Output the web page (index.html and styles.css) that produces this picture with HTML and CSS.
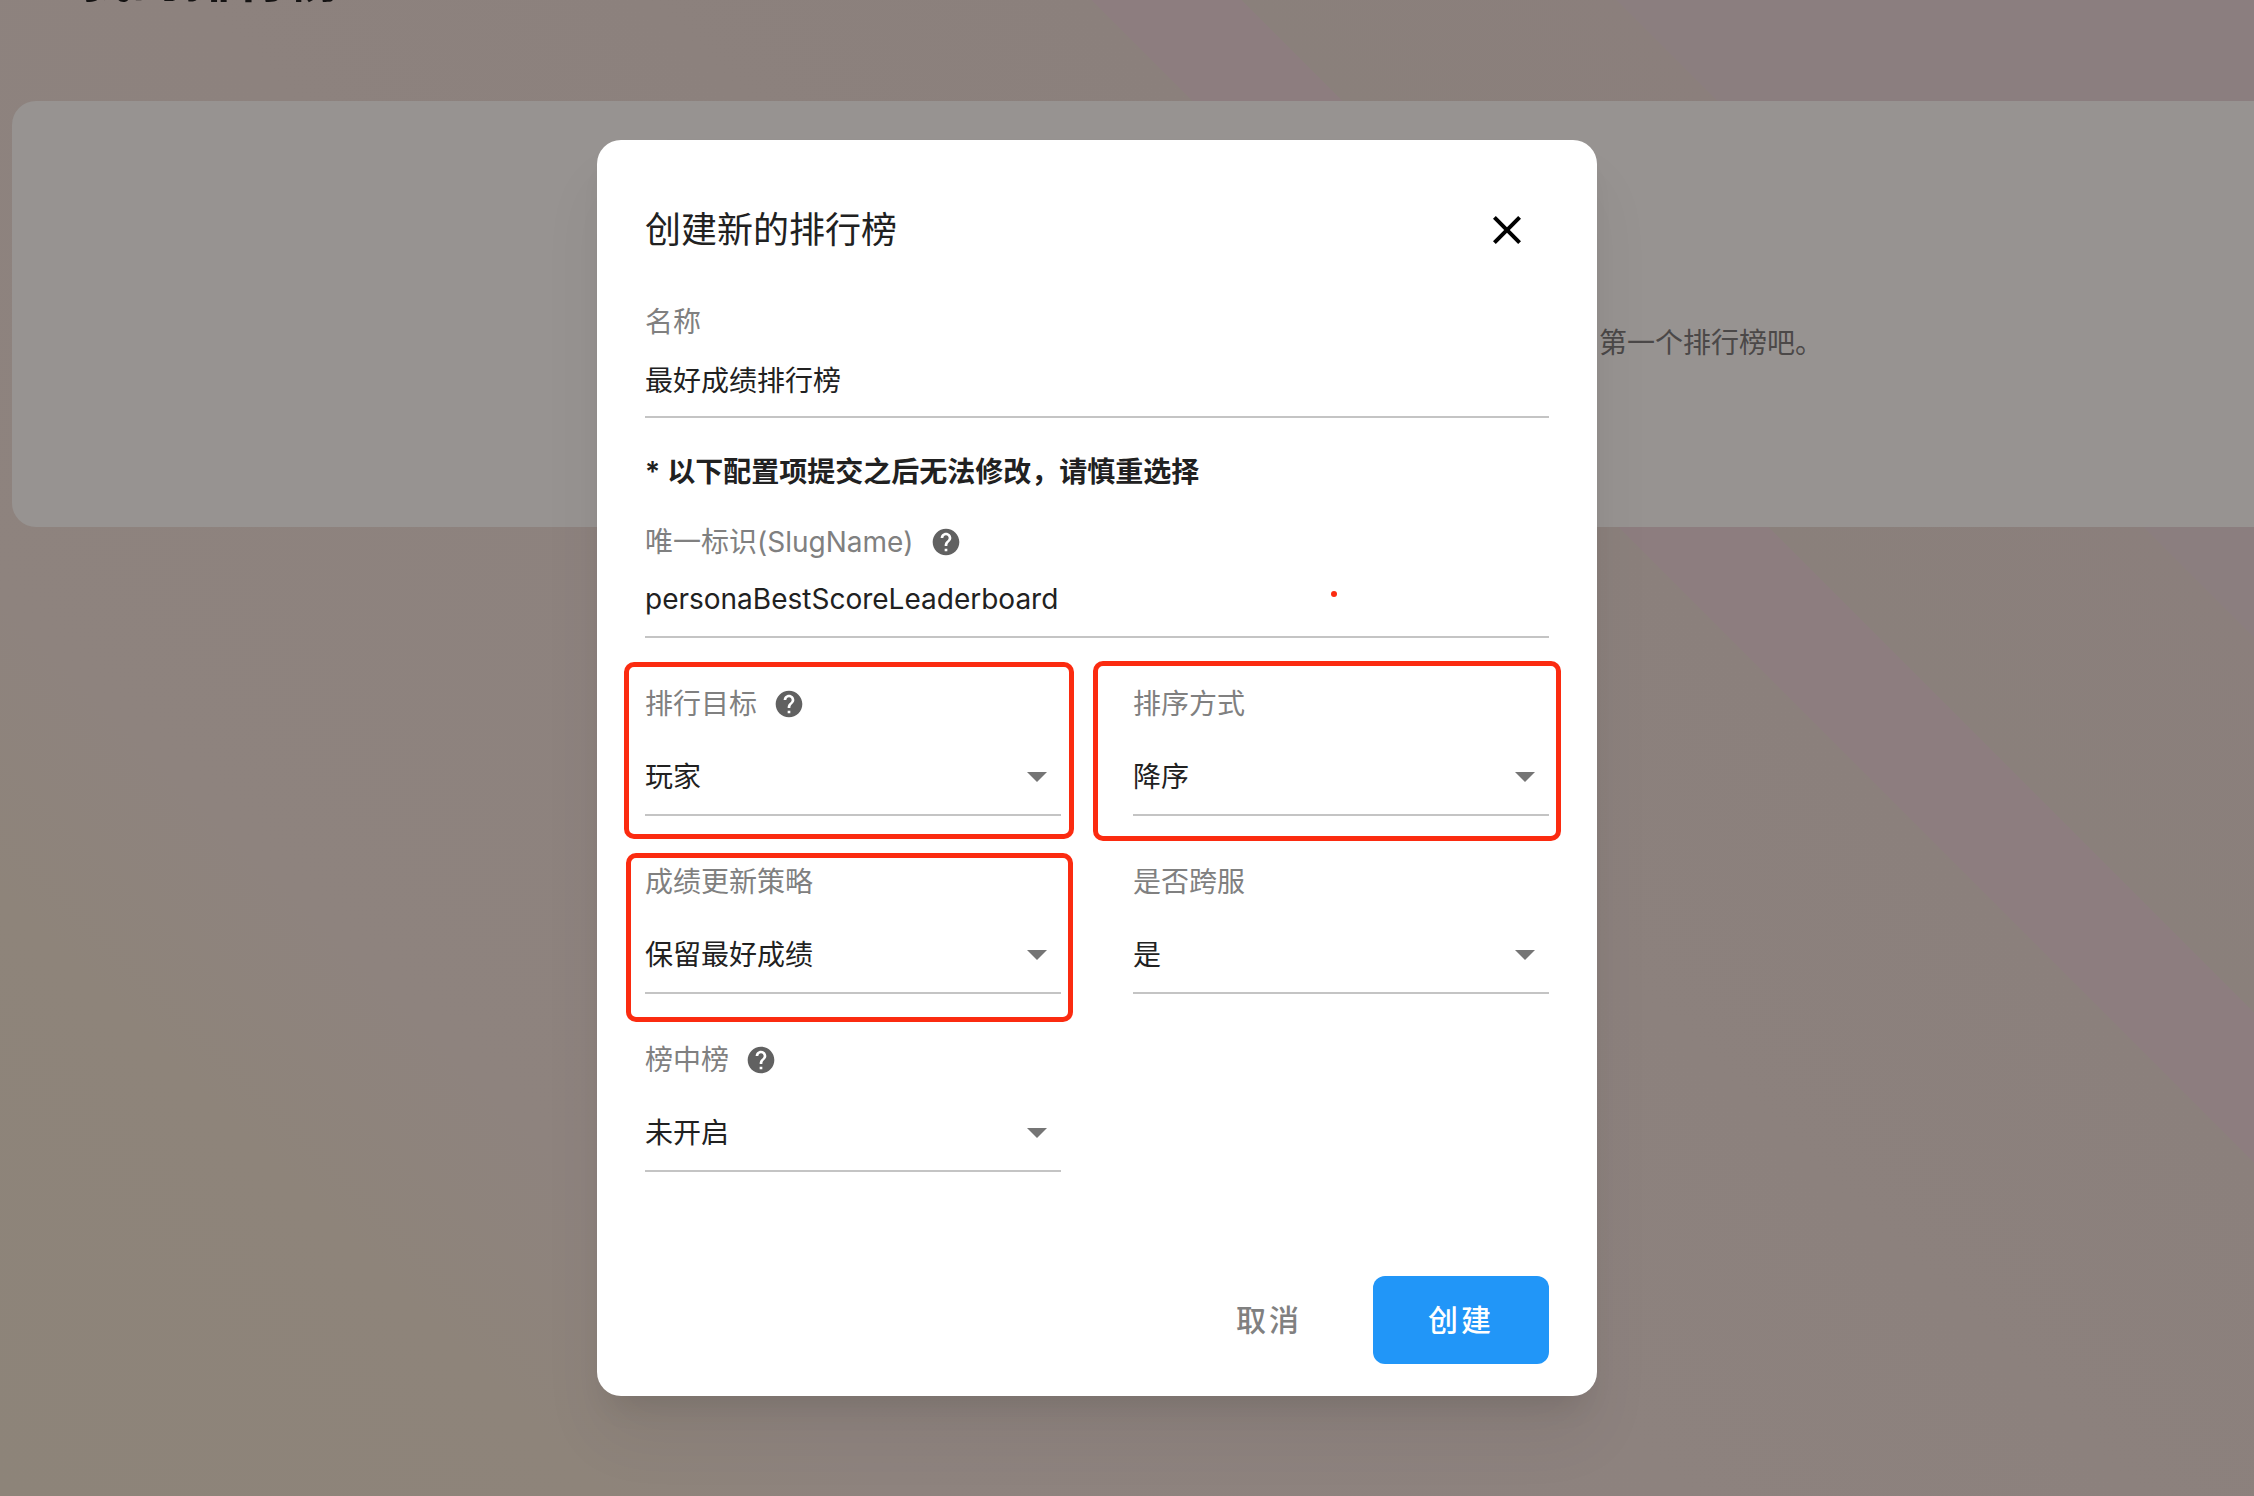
FILE: index.html
```html
<!DOCTYPE html>
<html lang="zh-CN">
<head>
<meta charset="utf-8">
<title>创建新的排行榜</title>
<link rel="stylesheet" href="styles.css">
</head>
<body>
<svg class="sprite" aria-hidden="true">
  <symbol id="help" viewBox="0 0 24 24"><path d="M12 2C6.48 2 2 6.48 2 12s4.48 10 10 10 10-4.48 10-10S17.52 2 12 2zm1 17h-2v-2h2v2zm2.07-7.75l-.9.92C13.45 12.9 13 13.5 13 15h-2v-.5c0-1.1.45-2.1 1.17-2.83l1.24-1.26c.37-.36.59-.86.59-1.41 0-1.1-.9-2-2-2s-2 .9-2 2H8c0-2.21 1.79-4 4-4s4 1.79 4 4c0 .88-.36 1.68-.93 2.25z"/></symbol>
  <symbol id="arrow" viewBox="0 0 24 24"><path d="M7 10l5 5 5-5z"/></symbol>
</svg>
<main class="page">
  <h1 class="page-title">我的排行榜</h1>
  <section class="empty-card"><p class="empty-text">第一个排行榜吧。</p></section>
</main>
<div class="overlay">
  <form class="dialog" role="dialog" aria-labelledby="dialog-title">
    <header class="dialog-header">
      <h2 class="dialog-title" id="dialog-title">创建新的排行榜</h2>
      <button class="close" type="button" aria-label="关闭">
        <svg viewBox="0 0 24 24"><path d="M19 6.41L17.59 5 12 10.59 6.41 5 5 6.41 10.59 12 5 17.59 6.41 19 12 13.41 17.59 19 19 17.59 13.41 12z"/></svg>
      </button>
    </header>
    <div class="field">
      <label class="label" for="name">名称</label>
      <input class="control" id="name" type="text" value="最好成绩排行榜">
    </div>
    <p class="notice">* 以下配置项提交之后无法修改，请慎重选择</p>
    <div class="field">
      <label class="label" for="slug">唯一标识(SlugName)<svg class="help"><use href="#help"/></svg></label>
      <input class="control" id="slug" type="text" value="personaBestScoreLeaderboard">
    </div>
    <div class="options">
      <div class="field">
        <label class="label" for="target">排行目标<svg class="help"><use href="#help"/></svg></label>
        <div class="select"><select class="control" id="target"><option>玩家</option></select><svg class="arrow"><use href="#arrow"/></svg></div>
      </div>
      <div class="field">
        <label class="label" for="order">排序方式</label>
        <div class="select"><select class="control" id="order"><option>降序</option></select><svg class="arrow"><use href="#arrow"/></svg></div>
      </div>
      <div class="field">
        <label class="label" for="policy">成绩更新策略</label>
        <div class="select"><select class="control" id="policy"><option>保留最好成绩</option></select><svg class="arrow"><use href="#arrow"/></svg></div>
      </div>
      <div class="field">
        <label class="label" for="cross">是否跨服</label>
        <div class="select"><select class="control" id="cross"><option>是</option></select><svg class="arrow"><use href="#arrow"/></svg></div>
      </div>
      <div class="field">
        <label class="label" for="nested">榜中榜<svg class="help"><use href="#help"/></svg></label>
        <div class="select"><select class="control" id="nested"><option>未开启</option></select><svg class="arrow"><use href="#arrow"/></svg></div>
      </div>
    </div>
    <footer class="actions">
      <button class="button" type="button">取消</button>
      <button class="button primary" type="submit">创建</button>
    </footer>
    <span class="mark mark-target"></span>
    <span class="mark mark-order"></span>
    <span class="mark mark-policy"></span>
    <span class="dot"></span>
  </form>
</div>
</body>
</html>
```
FILE: styles.css
```css
* { box-sizing: border-box; }

body {
  margin: 0;
  min-height: 100vh;
  overflow: hidden;
  font-family: Inter, "Noto Sans CJK SC", sans-serif;
  font-size: 28px;
  line-height: 40px;
  color: #212121;
  background: linear-gradient(45deg,
    #8d8479 0%, #8e847a 16%, #8e837e 24%, #8d827e 45%, #8b807c 69%,
    #8d7d7f 69%, #8d7d7f 73%,
    #8a807b 73%, #8b7f7c 83%,
    #8b7e7f 83%, #8b7e7f 100%);
}

h1, h2, p { margin: 0; }

.sprite { display: none; }

.page { padding-left: 12px; }

/* The page is scrolled, so only the foot of its heading shows */
.page-title {
  height: 4px;
  margin-bottom: 97px;
  padding-left: 68px;
  overflow: hidden;
  display: flex;
  align-items: flex-end;
  font-size: 52px;
  line-height: 50px;
  color: #151313;
}

.empty-card {
  height: 426px;
  padding: 222px 0 0 calc(50% + 466px);
  border-radius: 24px 0 0 24px;
  background: #979391;
}

.empty-text { color: #4b4848; }

.overlay {
  position: absolute;
  inset: 0;
  display: flex;
  justify-content: center;
  align-items: flex-start;
  padding: 140px 60px 100px 0;
}

.dialog {
  position: relative;
  width: 1000px;
  padding: 48px 48px 32px;
  border-radius: 24px;
  background: #fff;
  box-shadow: 0 22px 30px -14px rgba(0, 0, 0, .1), 0 44px 64px 0 rgba(0, 0, 0, .05);
}

.dialog-header {
  display: flex;
  align-items: center;
  justify-content: space-between;
  height: 84px;
  margin-bottom: 30px;
  padding-right: 18px;
}

.dialog-title {
  font-size: 36px;
  font-weight: 400;
  line-height: 48px;
}

.close {
  width: 48px;
  height: 48px;
  padding: 0;
  border: 0;
  background: none;
}

.close svg { display: block; }

.label {
  display: flex;
  align-items: center;
  gap: 16px;
  height: 40px;
  color: #808080;
}

.help {
  width: 32px;
  height: 32px;
  fill: #616161;
}

.control {
  display: block;
  width: 100%;
  height: 76px;
  padding: 0;
  border: 0;
  border-bottom: 2px solid #c4c4c4;
  border-radius: 0;
  outline: 0;
  appearance: none;
  background: none;
  font: inherit;
  color: #212121;
}

.notice {
  margin: 34px 0 30px;
  font-weight: 600;
}

.options {
  display: grid;
  grid-template-columns: 1fr 1fr;
  gap: 46px 72px;
  margin-top: 46px;
}

.select {
  display: grid;
  align-items: center;
  padding-top: 16px;
}

.select .control, .arrow { grid-area: 1 / 1; }

.arrow {
  width: 48px;
  height: 48px;
  margin-bottom: 4px;
  justify-self: end;
  fill: #757575;
  pointer-events: none;
}

.actions {
  display: flex;
  justify-content: flex-end;
  gap: 16px;
  margin-top: 104px;
}

.button {
  width: 176px;
  height: 88px;
  padding: 0;
  border: 0;
  border-radius: 12px;
  background: none;
  font: inherit;
  font-size: 30px;
  font-weight: 500;
  letter-spacing: 3px;
  color: #808080;
}

.primary {
  background: #2196f8;
  color: #fff;
}

/* Highlight frames drawn over the form */
.mark {
  position: absolute;
  border: 5px solid #fb2b10;
  border-radius: 10px;
  pointer-events: none;
}

.mark-target { left: 27px; top: 522px; width: 450px; height: 177px; }
.mark-order { left: 496px; top: 521px; width: 468px; height: 180px; }
.mark-policy { left: 29px; top: 713px; width: 447px; height: 169px; }

.dot {
  position: absolute;
  left: 734px;
  top: 451px;
  width: 6px;
  height: 6px;
  border-radius: 50%;
  background: #fb2b10;
}
```
